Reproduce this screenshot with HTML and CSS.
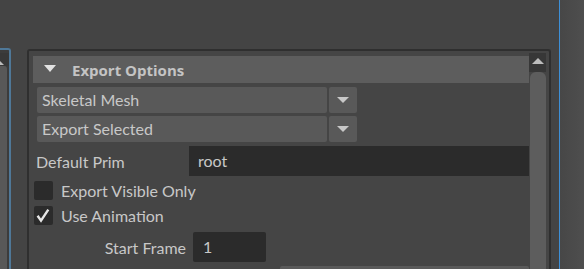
FILE: index.html
```html
<!DOCTYPE html>
<html>
<head>
<meta charset="utf-8">
<link rel="stylesheet" href="styles.css">
</head>
<body>
<div class="app">
  <div class="side-left">
    <div class="sl-arrow"><span class="tri-up"></span></div>
    <div class="sl-handle"></div>
  </div>
  <div class="frame">
    <div class="content">
      <div class="section-header">
        <span class="tri-down"></span>
        <span class="section-title">Export Options</span>
      </div>
      <div class="dropdown">
        <div class="dd-main">Skeletal Mesh</div>
        <div class="dd-btn"><span class="tri-down small"></span></div>
      </div>
      <div class="dropdown second">
        <div class="dd-main">Export Selected</div>
        <div class="dd-btn"><span class="tri-down small"></span></div>
      </div>
      <div class="field-row">
        <div class="label">Default Prim</div>
        <div class="textfield wide">root</div>
      </div>
      <div class="check-row first">
        <div class="checkbox"></div>
        <div class="label">Export Visible Only</div>
      </div>
      <div class="check-row">
        <div class="checkbox">
          <svg width="19" height="19" viewBox="0 0 19 19"><path d="M3.6 9.8 L7 14.6 L14.3 3.6" fill="none" stroke="#e6e6e6" stroke-width="2.4"/></svg>
        </div>
        <div class="label">Use Animation</div>
      </div>
      <div class="field-row frame-row">
        <div class="label right">Start Frame</div>
        <div class="textfield short">1</div>
      </div>
      <div class="bottom-row">
        <div class="bottom-bar"></div>
      </div>
    </div>
    <div class="scrollbar">
      <div class="sb-arrow"><span class="tri-up"></span></div>
      <div class="sb-handle"></div>
    </div>
  </div>
  <div class="gap-right"></div>
  <div class="side-right"></div>
</div>
</body>
</html>
```
FILE: styles.css
```css
html, body {
  margin: 0;
  padding: 0;
  width: 584px;
  height: 269px;
  overflow: hidden;
  background: #444444;
  font-family: "Lato", "Open Sans", sans-serif;
  color: #c8c8c8;
}

.app {
  display: flex;
  height: 269px;
  padding-top: 48px;
  box-sizing: border-box;
}

.side-left {
  width: 9px;
  flex-shrink: 0;
  border-top: 2px solid #4f7898;
  border-right: 2px solid #4f7898;
  border-top-right-radius: 3px;
  background: #3c3c3c;
  display: flex;
  flex-direction: column;
  padding-top: 3px;
  overflow: hidden;
}

.sl-arrow {
  height: 13px;
  flex-shrink: 0;
  position: relative;
  background: #383838;
}

.sl-arrow .tri-up {
  position: absolute;
  left: -8px;
  top: 6px;
}

.sl-handle {
  width: 7px;
  flex: 1;
  background: #585858;
  border-top-right-radius: 3px;
}

.frame {
  margin-left: 16px;
  margin-top: 1px;
  width: 524px;
  flex-shrink: 0;
  border: 2px solid #2f2f2f;
  border-bottom: none;
  border-radius: 3px 3px 0 0;
  box-sizing: border-box;
  background: #454545;
  display: flex;
  overflow: hidden;
}

.content {
  width: 496px;
  flex-shrink: 0;
  padding-left: 4px;
  padding-top: 5px;
  display: flex;
  flex-direction: column;
}

.content > * {
  flex-shrink: 0;
}

.section-header {
  height: 27px;
  background: #5d5d5d;
  display: flex;
  align-items: center;
}

.tri-down {
  width: 0;
  height: 0;
  border-left: 6.5px solid transparent;
  border-right: 6.5px solid transparent;
  border-top: 7px solid #e2e2e2;
  margin-left: 11px;
  margin-top: -3px;
}

.tri-down.small {
  border-top-width: 6px;
  margin: 0;
  border-top-color: #c8c8c8;
}

.tri-up {
  width: 0;
  height: 0;
  border-left: 6.5px solid transparent;
  border-right: 6.5px solid transparent;
  border-bottom: 6px solid #bdbdbd;
  display: block;
}

.section-title {
  font-family: "Open Sans", "Lato", sans-serif;
  font-weight: bold;
  font-size: 15px;
  margin-left: 16px;
  color: #c4c4c4;
  margin-top: 1px;
}

.dropdown {
  margin-top: 4px;
  margin-left: 4px;
  width: 320px;
  height: 26px;
  display: flex;
  gap: 2px;
}

.dropdown.second {
  margin-top: 3px;
}

.dd-main {
  flex: 1;
  background: #595959;
  border-radius: 2px;
  font-size: 16px;
  line-height: 26px;
  padding-left: 5px;
}

.dd-btn {
  width: 28px;
  background: #595959;
  border-radius: 2px;
  display: flex;
  align-items: center;
  justify-content: center;
}

.field-row {
  margin-top: 4px;
  height: 30px;
  display: flex;
  align-items: center;
}

.label {
  font-size: 16px;
}

.field-row .label {
  width: 153px;
  padding-left: 3px;
}

.textfield {
  height: 30px;
  background: #2b2b2b;
  font-size: 16px;
  line-height: 30px;
  box-sizing: border-box;
}

.textfield.wide {
  flex: 1;
  padding-left: 9px;
}

.check-row {
  display: flex;
  align-items: center;
  height: 19px;
  margin-top: 6px;
}

.check-row.first {
  margin-top: 5px;
}

.checkbox {
  width: 19px;
  height: 19px;
  background: #2b2b2b;
  border-radius: 2px;
  margin-left: 1px;
  margin-right: 8px;
}

.checkbox svg {
  display: block;
}

.frame-row {
  margin-top: 7px;
}

.frame-row .label.right {
  width: 153px;
  padding-left: 0;
  text-align: right;
}

.textfield.short {
  width: 73px;
  margin-left: 7px;
  padding-left: 10px;
  border-radius: 2px;
}

.bottom-row {
  margin-top: 4px;
  display: flex;
  justify-content: flex-end;
}

.bottom-bar {
  width: 249px;
  height: 10px;
  background: #5a5a5a;
  border-radius: 2px 2px 0 0;
}

.scrollbar {
  width: 17px;
  flex-shrink: 0;
  margin-top: 2px;
  display: flex;
  flex-direction: column;
  margin-right: 3px;
}

.sb-arrow {
  height: 19px;
  flex-shrink: 0;
  background: #373737;
  display: flex;
  justify-content: center;
  padding-top: 5px;
  box-sizing: border-box;
}

.sb-handle {
  flex: 1;
  margin-left: 1px;
  background: #5d5d5d;
  border-radius: 6px 6px 0 0;
}

.gap-right {
  width: 8px;
  flex-shrink: 0;
}

.side-right {
  flex: 1;
  border-left: 1px solid #3d8fd6;
  background: linear-gradient(to right, #474747, #4e4e4e);
  margin-top: -48px;
}
```
